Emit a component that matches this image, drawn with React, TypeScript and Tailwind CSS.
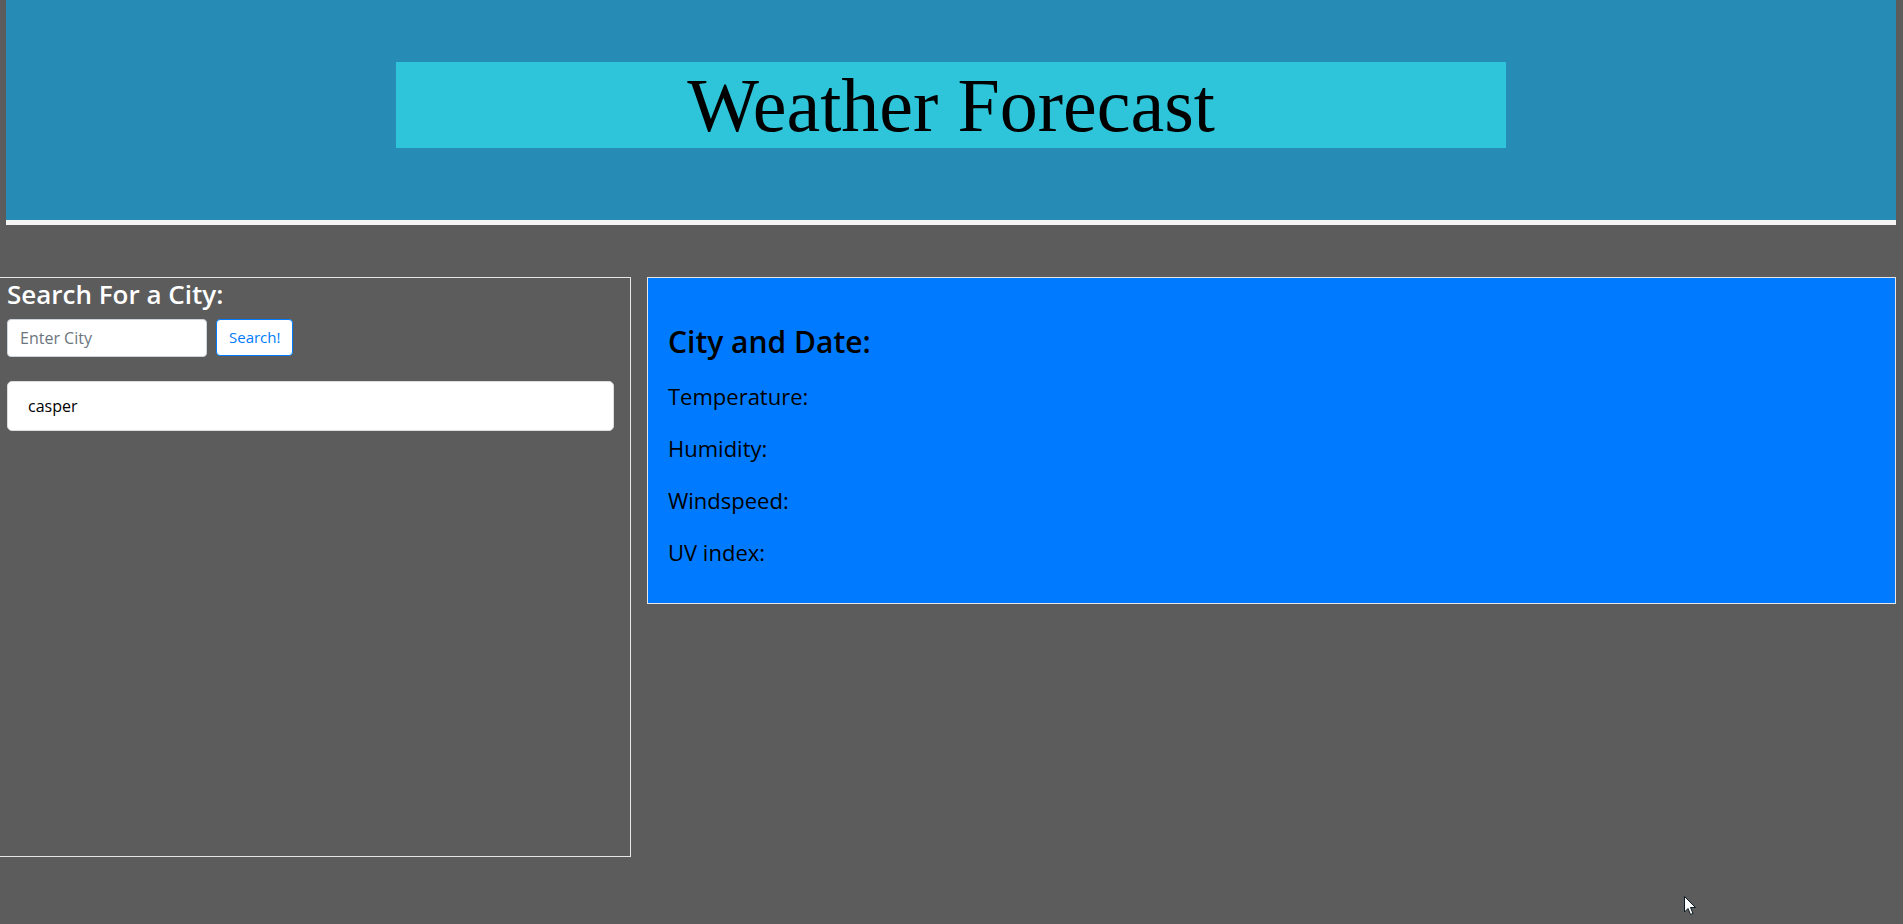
import React from "react";

export default function App() {
  const sans = { fontFamily: '"Open Sans", "Noto Sans", sans-serif' };
  return (
    <div className="relative min-h-[924px] bg-[#5c5c5c]" style={sans}>
      <header className="ml-[6px] mr-[7px] h-[225px] bg-[#278cb5] border-b-[5px] border-[#f4f4f4] pt-[62px]">
        <div
          className="mx-auto w-[1110px] h-[86px] bg-[#2ec5da] text-center text-[76px] leading-[86px] text-black"
          style={{ fontFamily: '"Liberation Serif", "DejaVu Serif", serif' }}
        >
          Weather Forecast
        </div>
      </header>

      <div className="mt-[52px] flex gap-[16px]">
        <div className="w-[631px] h-[580px] border border-l-0 border-[#e6e6e6] pl-[7px] pr-[16px]">
          <h4 className="mt-[1px] text-[26px] leading-[1.2] font-semibold text-white">Search For a City:</h4>
          <div className="mt-[9px] flex gap-[9px]">
            <input
              placeholder="Enter City"
              className="w-[200px] h-[38px] rounded-[4px] border border-[#ced4da] bg-white px-[12px] text-[16px] text-[#495057] placeholder:text-[#6c757d] outline-none"
            />
            <button className="h-[37px] rounded-[4px] border border-[#007bff] bg-white px-[12px] text-[15px] text-[#007bff]">
              Search!
            </button>
          </div>
          <ul className="mt-[24px]">
            <li className="h-[50px] rounded-[5px] border border-[#dcdcdc] bg-white px-[20px] py-[12px] text-[16px] leading-[24px] text-black">
              casper
            </li>
          </ul>
        </div>

        <div className="w-[1249px] h-[327px] border border-[#e6e6e6] bg-[#007bff] pl-[20px] pt-[46px] text-black">
          <h2 className="text-[30px] leading-[36px] font-semibold mb-[18px]">City and Date:</h2>
          <p className="text-[22px] leading-[36px] mb-[16px]">Temperature:</p>
          <p className="text-[22px] leading-[36px] mb-[16px]">Humidity:</p>
          <p className="text-[22px] leading-[36px] mb-[16px]">Windspeed:</p>
          <p className="text-[22px] leading-[36px] mb-[16px]">UV index:</p>
        </div>
      </div>

      <svg
        className="absolute left-[1684px] top-[896px]"
        width="13"
        height="20"
        viewBox="0 0 13 20"
      >
        <path d="M0.5 0.5 L0.5 16 L4 12.5 L6.5 18.5 L9 17.5 L6.5 11.5 L11.5 11.5 Z" fill="white" stroke="#0b1a22" strokeWidth="1" />
      </svg>
    </div>
  );
}
